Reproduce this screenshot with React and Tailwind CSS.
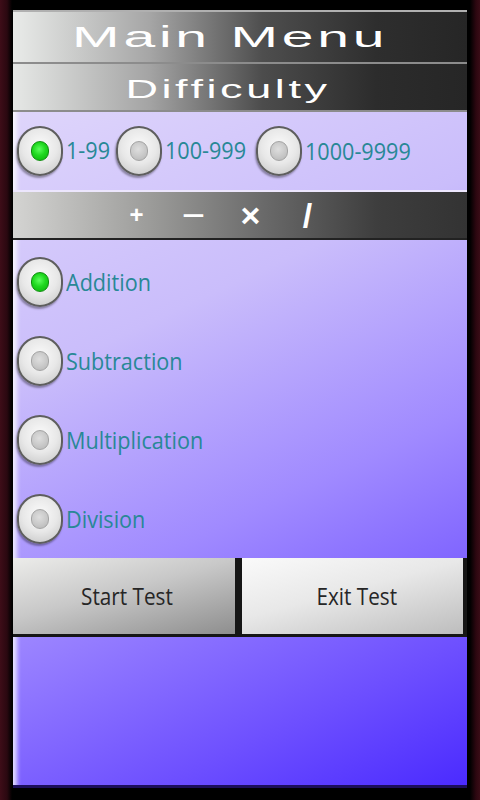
import React from 'react';

const labelFont = { fontFamily: '"Open Sans", "DejaVu Sans", sans-serif' };
const titleFont = { fontFamily: '"Liberation Sans", Arial, sans-serif' };

const Radio = ({ on }) => {
    return (
        <span className="flex h-[50px] w-[46px] shrink-0 items-center justify-center rounded-full border-2 border-[#5e5e5e] bg-[radial-gradient(circle_at_50%_40%,#fbfbfb_0%,#e8e8e8_50%,#c2c2c2_100%)] shadow-[-1px_2px_2px_rgba(0,0,0,0.35)]">
            {on ? (
                <span className="h-[20px] w-[18px] rounded-full border border-[#0f8f0f] bg-[radial-gradient(circle_at_45%_40%,#5dff5d_0%,#1fd81f_45%,#08b008_100%)]" />
            ) : (
                <span className="h-[20px] w-[18px] rounded-full border border-[#a4a4a4] bg-[radial-gradient(circle_at_45%_40%,#dedede_0%,#c8c8c8_55%,#b4b4b4_100%)]" />
            )}
        </span>
    );
};

const Label = ({ children }) => (
    <span className="inline-block origin-left scale-x-90 whitespace-nowrap text-[24px] leading-none text-[#288896]" style={labelFont}>
        {children}
    </span>
);

const Bar = ({ children, className }) => (
    <div className={"flex items-center justify-center border-t-2 border-[#8c8c8c] " + className}>
        {children}
    </div>
);

const App = () => {
    const ops = ['Addition', 'Subtraction', 'Multiplication', 'Division'];

    return (
        <div className="flex h-[800px] w-[480px] bg-[linear-gradient(to_right,#3e0d18_0px,#2a0810_7px,#000_12px,#000_470px,#2c0710_476px,#3a0c16_480px)] pb-[12px] pl-[13px] pr-[13px] pt-[10px]">
            <div className="flex flex-1 flex-col bg-[linear-gradient(155deg,#e6defb_0%,#cabdfb_38%,#a08aff_62%,#6e50ff_85%,#4a2aff_100%)] shadow-[inset_6px_0_4px_-2px_rgba(255,255,255,0.75)]">

                {/* title + difficulty header bars */}
                <Bar className="h-[52px] border-t-[#b0b0b0] pr-[20px] bg-[linear-gradient(to_right,#e9ebe9_0%,#a6a6a6_30%,#4e4e4e_55%,#2e2e2e_80%,#262626_100%)]">
                    <span className="inline-block scale-x-[1.9] text-[30px] leading-none tracking-[2px] text-white" style={titleFont}>Main Menu</span>
                </Bar>

                <Bar className="h-[50px] border-b-2 border-b-[#8c8c8c] pr-[24px] bg-[linear-gradient(to_right,#e6e8e6_0%,#a4a4a4_30%,#4c4c4c_55%,#2c2c2c_80%,#262626_100%)]">
                    <span className="inline-block translate-y-[2px] scale-x-[1.8] text-[25px] leading-none tracking-[2px] text-white" style={titleFont}>Difficulty</span>
                </Bar>

                <div className="flex h-[78px] items-center gap-[3px] pl-[4px]">
                    <Radio on />
                    <span className="w-[47px]"><Label>1-99</Label></span>
                    <Radio />
                    <span className="w-[88px]"><Label>100-999</Label></span>
                    <Radio />
                    <Label>1000-9999</Label>
                </div>

                {/* operator bar */}
                <div className="flex h-[50px] items-center justify-center border-t-2 border-b-2 border-t-[#ece6fd] border-b-[#222] bg-[linear-gradient(to_right,#d4d4d2_0%,#9c9c9a_30%,#6a6a6a_55%,#3e3e3e_80%,#333_100%)] pr-[36px] text-white" style={titleFont}>
                    <span className="w-[57px] text-center text-[24px] font-bold leading-none">+</span>
                    <span className="w-[57px] text-center text-[40px] leading-none">&minus;</span>
                    <span className="w-[57px] text-center text-[34px] font-bold leading-none">&times;</span>
                    <span className="w-[57px] text-center text-[34px] font-bold leading-none">/</span>
                </div>

                <div className="flex h-[318px] flex-col gap-[29px] pl-[4px] pt-[17px]">
                    {ops.map((op, i) => (
                        <div key={op} className="flex items-center gap-[3px]">
                            <Radio on={i === 0} />
                            <Label>{op}</Label>
                        </div>
                    ))}
                </div>

                <div className="flex h-[79px] text-[#262626]" style={labelFont}>
                    <button className="flex w-[229px] items-center justify-center border-b-[3px] border-r-[7px] border-[#161616] bg-[linear-gradient(165deg,#ececea_0%,#c8c8c8_45%,#8e8e8e_100%)]">
                        <span className="inline-block translate-x-[3px] scale-x-90 text-[23px] leading-none">Start Test</span>
                    </button>
                    <button className="flex flex-1 items-center justify-center border-b-[3px] border-r-[4px] border-[#161616] bg-[linear-gradient(165deg,#fafafa_0%,#e8e8e8_45%,#bdbdbd_100%)]">
                        <span className="inline-block translate-x-[4px] scale-x-90 text-[23px] leading-none">Exit Test</span>
                    </button>
                </div>

                <div className="flex-1 border-b-[3px] border-[#1c0e5a]" />
            </div>
        </div>
    );
};

export default App;
